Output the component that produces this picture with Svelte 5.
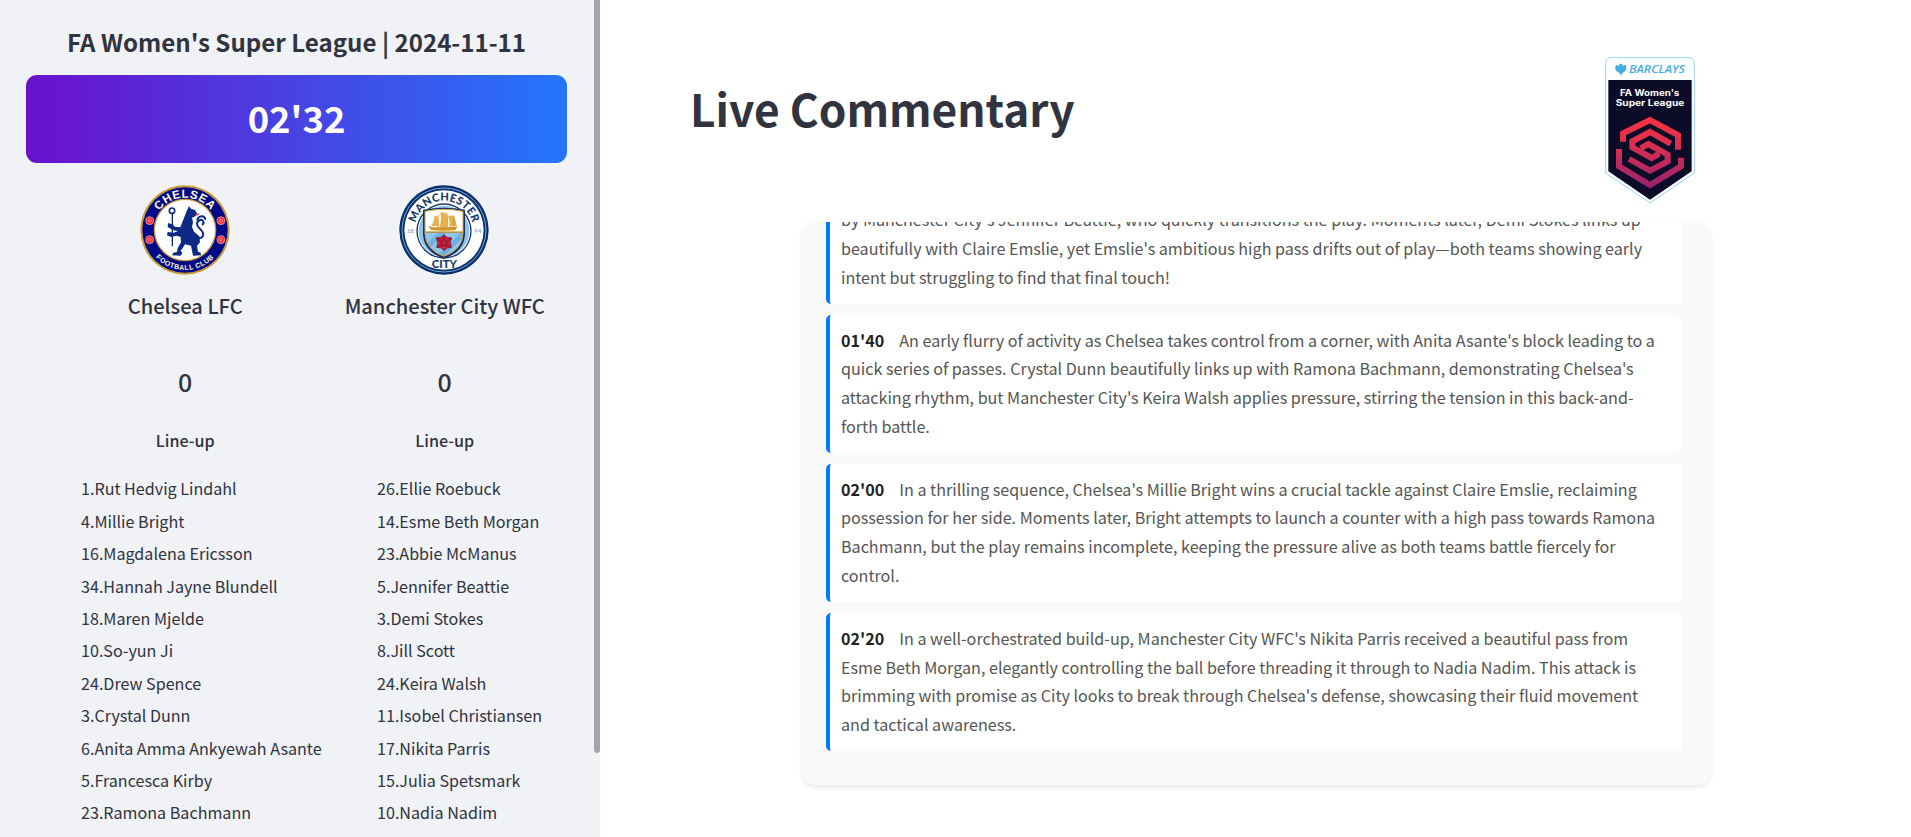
<script>
  const home = ['1.Rut Hedvig Lindahl', '4.Millie Bright', '16.Magdalena Ericsson', '34.Hannah Jayne Blundell', '18.Maren Mjelde', '10.So-yun Ji', '24.Drew Spence', '3.Crystal Dunn', '6.Anita Amma Ankyewah Asante', '5.Francesca Kirby', '23.Ramona Bachmann'];
  const away = ['26.Ellie Roebuck', '14.Esme Beth Morgan', '23.Abbie McManus', '5.Jennifer Beattie', '3.Demi Stokes', '8.Jill Scott', '24.Keira Walsh', '11.Isobel Christiansen', '17.Nikita Parris', '15.Julia Spetsmark', '10.Nadia Nadim'];
  const comments = [
    { time: '', lines: ["by Manchester City's Jennifer Beattie, who quickly transitions the play. Moments later, Demi Stokes links up", "beautifully with Claire Emslie, yet Emslie's ambitious high pass drifts out of play—both teams showing early", 'intent but struggling to find that final touch!'] },
    { time: "01'40", lines: ["An early flurry of activity as Chelsea takes control from a corner, with Anita Asante's block leading to a", "quick series of passes. Crystal Dunn beautifully links up with Ramona Bachmann, demonstrating Chelsea's", "attacking rhythm, but Manchester City's Keira Walsh applies pressure, stirring the tension in this back-and-", 'forth battle.'] },
    { time: "02'00", lines: ["In a thrilling sequence, Chelsea's Millie Bright wins a crucial tackle against Claire Emslie, reclaiming", 'possession for her side. Moments later, Bright attempts to launch a counter with a high pass towards Ramona', 'Bachmann, but the play remains incomplete, keeping the pressure alive as both teams battle fiercely for', 'control.'] },
    { time: "02'20", lines: ["In a well-orchestrated build-up, Manchester City WFC's Nikita Parris received a beautiful pass from", 'Esme Beth Morgan, elegantly controlling the ball before threading it through to Nadia Nadim. This attack is', "brimming with promise as City looks to break through Chelsea's defense, showcasing their fluid movement", 'and tactical awareness.'] }
  ];
</script>

<div class="app">
  <aside>
    <h2>FA Women's Super League | 2024-11-11</h2>
    <div class="clock">02'32</div>
    <div class="teams">
      <section>
        <svg class="crest" viewBox="0 0 270 270">
          <defs>
            <path id="cTop" d="M38 135a97 97 0 0 1 194 0" />
            <path id="cBot" d="M15 135a120 120 0 0 0 240 0" />
          </defs>
          <circle cx="135" cy="135" r="134" fill="#c99a3c" />
          <circle cx="135" cy="135" r="128" fill="#000a86" />
          <circle cx="135" cy="135" r="94" fill="#c99a3c" />
          <circle cx="135" cy="135" r="90" fill="#fff" />
          <g fill="#fff8dc" font-family="Liberation Sans" font-weight="700" text-anchor="middle">
            <text font-size="35" letter-spacing="2"><textPath href="#cTop" startOffset="50%">CHELSEA</textPath></text>
            <text font-size="21" letter-spacing="1.4"><textPath href="#cBot" startOffset="50%">FOOTBALL CLUB</textPath></text>
          </g>
          {#each [[29, 107], [29, 164], [243, 107], [243, 164]] as [x, y]}
            <circle cx={x} cy={y} r="12" fill="#f3323a" stroke="#e9b6c4" stroke-width="2" />
            <circle cx={x} cy={y} r="4" fill="none" stroke="#ffb0b0" stroke-width="2" />
          {/each}
          <g fill="none" stroke="#0a2a86" stroke-linecap="round" stroke-linejoin="round">
            <circle cx="96" cy="77" r="8" stroke-width="5" />
            <path d="M97 86V182" stroke-width="4" />
            <path d="M168 158c22 6 28-10 14-24s-14-22-4-28 16 8 10 12M172 104c4-12 20-14 24-2" stroke-width="6" />
          </g>
          <path fill="#0a2a86" d="M141 76l6-12 6 7 12 4 6 10-5 9-10 4 3 14-3 14 6 14 16 14 2 18-9 10 3 18 8 3 1 8-24 1-6-30-18-4-9 15-5 3 6 8-5 8-26-1 4-8 11-2 2-12 10-17-1-16-12-4-17 4-12-5 2-10 18 2 13-5-14-2-17-10 1-12 13 4 8 7 16 2z" />
          <path d="M168 90l9-3" stroke="#ef4444" stroke-width="5" />
        </svg>
        <h3>Chelsea LFC</h3>
        <div class="score">0</div>
        <h4>Line-up</h4>
        <ul class="h">
          {#each home as p}<li>{p}</li>{/each}
        </ul>
      </section>
      <section>
        <svg class="crest city" viewBox="0 0 270 270">
          <defs>
            <path id="mTop" d="M135 223a88 88 0 0 1 0-176a88 88 0 0 1 0 176" />
            <clipPath id="shield"><path d="M78 79q57-12 114 0v67q-2 48-57 68-55-20-57-68z" /></clipPath>
          </defs>
          <circle cx="135" cy="135" r="134" fill="#0b2f6b" />
          <circle cx="135" cy="135" r="126" fill="none" stroke="#6fa9d8" stroke-width="3" />
          <circle cx="135" cy="135" r="119" fill="#fff" />
          <circle cx="135" cy="138" r="83" fill="#16396f" />
          <circle cx="135" cy="138" r="79" fill="#fff" />
          <circle cx="135" cy="138" r="76" fill="#8ec2ea" />
          <path d="M72 74q63-12 126 0v72q-2 54-63 75-61-21-63-75z" fill="#16305f" />
          <g clip-path="url(#shield)">
            <path fill="#fff" d="M70 60h130v82H70z" />
            <path fill="#8fc6ee" d="M70 144h130v80H70z" />
            <path d="M70 190l46-46h22l-60 60zM115 212l70-68h20l-80 80z" fill="#6eb0e2" />
            <path d="M70 141h130" stroke="#d3a33b" stroke-width="4" />
          </g>
          <path d="M78 79q57-12 114 0v67q-2 48-57 68-55-20-57-68z" fill="none" stroke="#d9a840" stroke-width="3" />
          <path fill="#e6b14a" d="M106 92l10 2 2 30-22-1q10-14 10-31zM124 82l18 2 4 18-2 24h-22q6-20 2-44zM148 94l14-3 8 16 3 16-22 2q3-14-3-31z" />
          <path fill="#cf942c" d="M88 123l12 4 70-1 6-5-6 14q-40 5-74 0z" />
          <path d="M119 90v36M146 86v42M165 92v36" stroke="#b98428" stroke-width="2" />
          <path d="M135 149l9 8 14 2-4 13 3 15-13 2-9 8-9-8-13-2 3-15-4-13 14-2z" fill="#c81f35" stroke="#5b1535" stroke-width="2" />
          <path d="M135 163l9 7-3 11h-12l-3-11zM135 149v14M158 159l-14 11M157 187l-16-6M113 187l16-6M112 159l14 11" fill="none" stroke="#5b1535" stroke-width="2" />
          <g fill="#16396f" font-family="Lato" font-weight="900" text-anchor="middle">
            <text font-size="33" letter-spacing="0.8"><textPath href="#mTop" startOffset="50%">MANCHESTER</textPath></text>
            <text x="136" y="248" font-size="34" textLength="76">CITY</text>
            <text x="34" y="144" font-size="19" fill="#7fb9e6" font-weight="700">18</text>
            <text x="236" y="144" font-size="19" fill="#7fb9e6" font-weight="700">94</text>
          </g>
        </svg>
        <h3>Manchester City WFC</h3>
        <div class="score">0</div>
        <h4>Line-up</h4>
        <ul class="a">
          {#each away as p}<li>{p}</li>{/each}
        </ul>
      </section>
    </div>
    <div class="thumb"></div>
  </aside>
  <main>
    <header>
      <h1>Live Commentary</h1>
      <svg class="league" viewBox="0 0 270 441">
        <defs>
          <linearGradient id="red" gradientUnits="userSpaceOnUse" x1="0" y1="180" x2="0" y2="395">
            <stop offset="0" stop-color="#fa3440" /><stop offset=".5" stop-color="#cf2d55" /><stop offset="1" stop-color="#96206f" />
          </linearGradient>
        </defs>
        <path d="M18 2H252q16 1 16 18V348L135 438 2 348V20Q2 3 18 2z" fill="#fff" stroke="#9bd5f5" stroke-width="3" />
        <path d="M10 69H260V343L135 428 10 343z" fill="#0d0c28" />
        <path fill="#43aee6" d="M31 27q5-6 10 1l3-8h7l3 8q5-7 10-1 2 10-4 16l-7 5-5 7-5-7-8-5q-6-6-4-16z" />
        <text x="72" y="49" font-family="Open Sans" font-size="34" font-weight="600" font-style="italic" fill="#43aee6" textLength="168" lengthAdjust="spacingAndGlyphs">BARCLAYS</text>
        <g fill="#fff" font-family="Inter" font-weight="700" font-size="27">
          <text x="45" y="118" textLength="178" lengthAdjust="spacingAndGlyphs">FA Women's</text>
          <text x="32" y="148" textLength="206" lengthAdjust="spacingAndGlyphs">Super League</text>
        </g>
        <g fill="none" stroke="url(#red)" stroke-width="18">
          <path d="M54 254V229L135 189 219 234V278" />
          <path d="M42 276V328L135 384 228 328V302" />
          <path d="M197 260L135 225 82 253V271L140 303 163 290" />
          <path d="M72 306L135 341 188 313V293L130 261 107 274" />
        </g>
      </svg>
    </header>
    <div class="feed">
      {#each comments as c}
        <article>
          {#each c.lines as line, i}
            <div class="line">{#if i === 0 && c.time}<b>{c.time}</b>{/if}{line}</div>
          {/each}
        </article>
      {/each}
    </div>
  </main>
</div>

<style>
  :global(body) { margin: 0; overflow: hidden; }
  .app { display: flex; width: 1911px; height: 837px; overflow: hidden; background: #fff; color: #31333f; font-family: "Noto Sans CJK SC", sans-serif; }
  h1, h2, h3, h4, ul { margin: 0; padding: 0; white-space: nowrap; }
  aside { position: relative; box-sizing: border-box; width: 600px; flex: none; height: 837px; overflow: hidden; background: #f0f2f6; padding: 24px 33px 0 26px; }
  h2 { font-size: 24.1px; line-height: 36px; text-align: center; font-weight: 700; margin-bottom: 15px; }
  .clock { box-sizing: border-box; height: 88px; line-height: 84px; border-radius: 11px; text-align: center; color: #fff; font-weight: 700; font-size: 36.4px; background: linear-gradient(to right, #6a11cb, #2575fc); }
  .teams { display: grid; grid-template-columns: 259.5px 259.5px; margin-left: 29.5px; padding-top: 22px; }
  section { display: flex; flex-direction: column; align-items: center; }
  .crest { width: 90px; height: 90px; display: block; }
  .city { margin-right: 1px; }
  h3 { font-size: 20.1px; font-weight: 500; line-height: 32px; margin-top: 15px; }
  .score { font-size: 25px; font-weight: 500; line-height: 36px; margin-top: 41px; }
  h4 { font-size: 16.1px; font-weight: 500; line-height: 24px; margin-top: 29px; }
  ul { list-style: none; align-self: flex-start; margin-top: 20.4px; font-size: 16.13px; line-height: 32.4px; }
  .h { margin-left: 25.5px; }
  .a { margin-left: 62px; }
  .thumb { position: absolute; right: 0; top: -10px; width: 6px; height: 763px; border-radius: 3px; background: #a3a4ac; }
  main { flex: 1; display: flex; flex-direction: column; }
  header { display: flex; justify-content: space-between; align-items: flex-start; box-sizing: border-box; height: 222px; padding: 57px 216px 0 90px; }
  h1 { font-size: 44.2px; line-height: 60px; margin-top: 21px; font-weight: 700; }
  .league { width: 90px; height: 147px; display: block; }
  .feed { box-sizing: border-box; width: 907.5px; height: 563px; margin-left: 202.5px; border-radius: 11px; background: #f9f9f9; box-shadow: 0 2px 5px rgba(0,0,0,.1); overflow: hidden; display: flex; flex-direction: column; justify-content: flex-end; gap: 11.1px; padding: 0 28.5px 34px 23.5px; }
  article { flex: none; border-left: 4px solid #007bff; border-radius: 5px; background: #fff; padding: 10.7px 11px 12.1px; color: #555; font-size: 16.12px; }
  .line { height: 28.8px; line-height: 28.8px; white-space: nowrap; }
  b { color: #222; margin-right: 15px; }
</style>
